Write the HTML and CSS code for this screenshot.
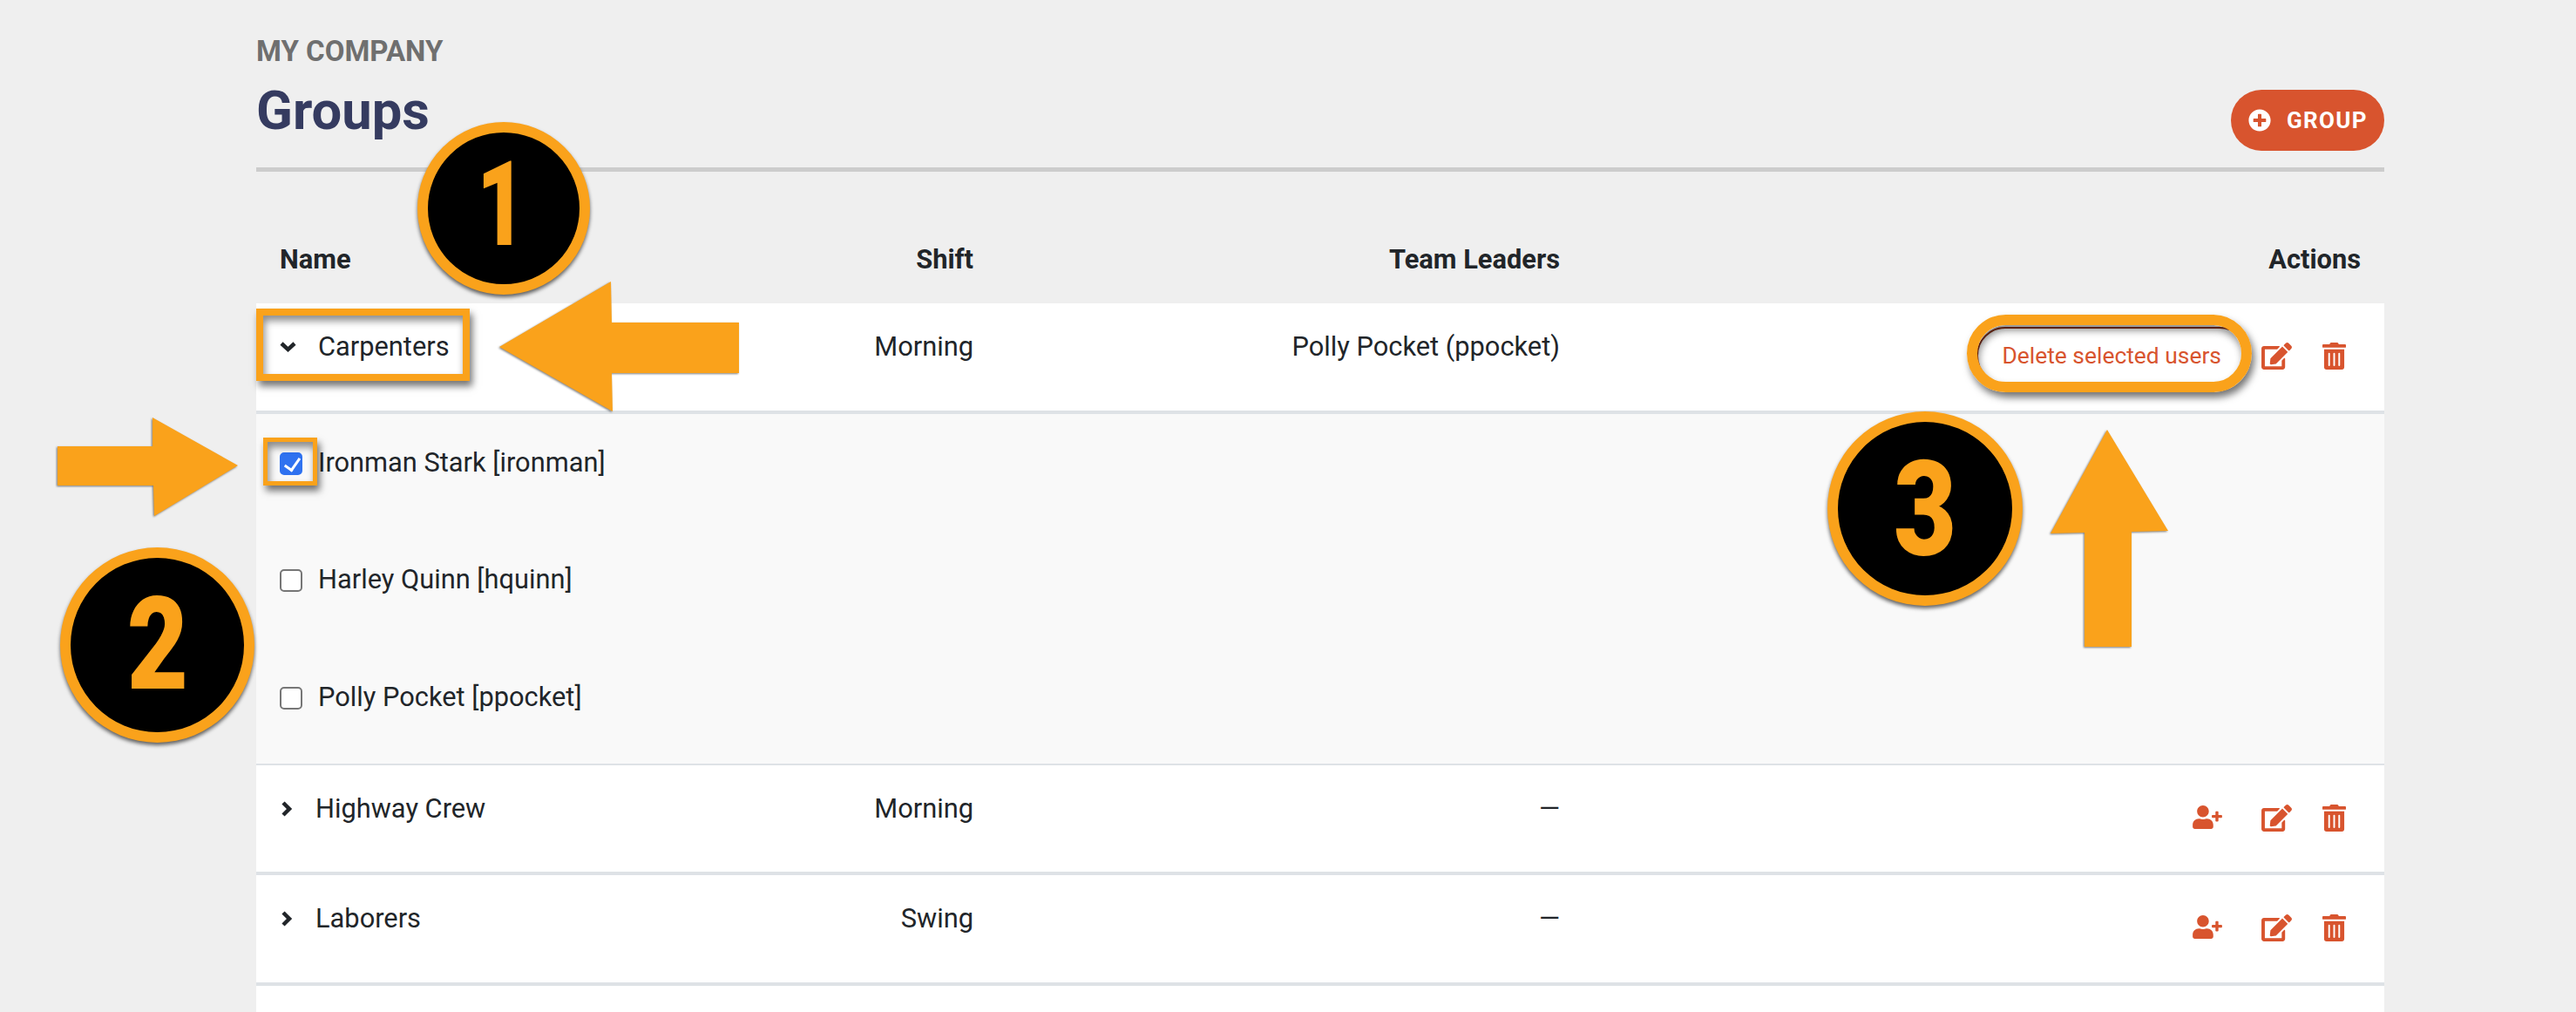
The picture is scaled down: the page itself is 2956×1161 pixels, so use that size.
FILE: index.html
```html
<!DOCTYPE html>
<html lang="en">
<head>
<meta charset="utf-8">
<title>Groups</title>
<link rel="stylesheet" href="styles.css">
</head>
<body>
<div class="page">
  <header class="page-head">
    <div>
      <div class="eyebrow">MY COMPANY</div>
      <h1 class="title">Groups</h1>
    </div>
    <button class="add-btn" type="button">
      <svg class="add-icon" viewBox="0 0 512 512"><path d="M256 8C119 8 8 119 8 256s111 248 248 248 248-111 248-248S393 8 256 8zm144 276c0 6.6-5.4 12-12 12h-92v92c0 6.6-5.4 12-12 12h-56c-6.6 0-12-5.4-12-12v-92h-92c-6.6 0-12-5.4-12-12v-56c0-6.6 5.4-12 12-12h92v-92c0-6.6 5.4-12 12-12h56c6.6 0 12 5.4 12 12v92h92c6.6 0 12 5.4 12 12v56z"/></svg>
      <span>GROUP</span>
    </button>
  </header>

  <div class="cols head-row">
    <div>Name</div>
    <div class="right">Shift</div>
    <div class="right">Team Leaders</div>
    <div class="right">Actions</div>
  </div>

  <div class="cols row">
    <div class="name name-open">
      <svg class="chev" viewBox="0 0 20 20"><polyline points="2,6 9.5,13 17,6"/></svg>
      <span>Carpenters</span>
    </div>
    <div class="right">Morning</div>
    <div class="right">Polly Pocket (ppocket)</div>
    <div class="actions">
      <button class="del-btn" type="button">Delete selected users</button>
      <svg class="ico ico-edit" viewBox="0 0 576 512"><use href="#edit"/></svg>
      <svg class="ico ico-trash" viewBox="0 0 448 512"><use href="#trash"/></svg>
    </div>
  </div>

  <div class="sub">
    <label class="sub-item"><input class="check" type="checkbox" checked><span>Ironman Stark [ironman]</span></label>
    <label class="sub-item"><input class="check" type="checkbox"><span>Harley Quinn [hquinn]</span></label>
    <label class="sub-item"><input class="check" type="checkbox"><span>Polly Pocket [ppocket]</span></label>
  </div>

  <div class="cols row row-short">
    <div class="name">
      <svg class="chev" viewBox="0 0 20 20"><polyline points="4,3 11,10 4,17"/></svg>
      <span>Highway Crew</span>
    </div>
    <div class="right">Morning</div>
    <div class="right">—</div>
    <div class="actions">
      <svg class="ico ico-user" viewBox="0 0 640 512"><use href="#user"/></svg>
      <svg class="ico ico-edit" viewBox="0 0 576 512"><use href="#edit"/></svg>
      <svg class="ico ico-trash" viewBox="0 0 448 512"><use href="#trash"/></svg>
    </div>
  </div>

  <div class="cols row">
    <div class="name">
      <svg class="chev" viewBox="0 0 20 20"><polyline points="4,3 11,10 4,17"/></svg>
      <span>Laborers</span>
    </div>
    <div class="right">Swing</div>
    <div class="right">—</div>
    <div class="actions">
      <svg class="ico ico-user" viewBox="0 0 640 512"><use href="#user"/></svg>
      <svg class="ico ico-edit" viewBox="0 0 576 512"><use href="#edit"/></svg>
      <svg class="ico ico-trash" viewBox="0 0 448 512"><use href="#trash"/></svg>
    </div>
  </div>

  <div class="row-rest"></div>
</div>

<svg class="defs" width="0" height="0">
  <defs>
    <path id="edit" d="M402.6 83.2l90.2 90.2c3.8 3.8 3.8 10 0 13.8L274.4 405.6l-92.8 10.3c-12.4 1.4-22.9-9.1-21.5-21.5l10.3-92.8L388.8 83.2c3.8-3.8 10-3.8 13.8 0zm162-22.9l-48.8-48.8c-15.2-15.2-39.9-15.2-55.2 0l-35.4 35.4c-3.8 3.8-3.8 10 0 13.8l90.2 90.2c3.8 3.8 10 3.8 13.8 0l35.4-35.4c15.2-15.3 15.2-40 0-55.2zM384 346.2V448H64V128h229.8c3.2 0 6.2-1.3 8.5-3.5l40-40c7.6-7.6 2.2-20.5-8.5-20.5H48C21.5 64 0 85.5 0 112v352c0 26.5 21.5 48 48 48h352c26.5 0 48-21.5 48-48V306.2c0-10.7-12.9-16-20.5-8.5l-40 40c-2.2 2.3-3.5 5.3-3.5 8.5z"/>
    <path id="trash" d="M32 464a48 48 0 0 0 48 48h288a48 48 0 0 0 48-48V128H32zm272-256a16 16 0 0 1 32 0v224a16 16 0 0 1-32 0zm-96 0a16 16 0 0 1 32 0v224a16 16 0 0 1-32 0zm-96 0a16 16 0 0 1 32 0v224a16 16 0 0 1-32 0zM432 32H312l-9.4-18.7A24 24 0 0 0 281.1 0H166.8a23.72 23.72 0 0 0-21.4 13.3L136 32H16A16 16 0 0 0 0 48v32a16 16 0 0 0 16 16h416a16 16 0 0 0 16-16V48a16 16 0 0 0-16-16z"/>
    <path id="user" d="M624 208h-64v-64c0-8.8-7.2-16-16-16h-32c-8.8 0-16 7.2-16 16v64h-64c-8.8 0-16 7.2-16 16v32c0 8.8 7.2 16 16 16h64v64c0 8.8 7.2 16 16 16h32c8.8 0 16-7.2 16-16v-64h64c8.8 0 16-7.2 16-16v-32c0-8.8-7.2-16-16-16zm-400 48c70.7 0 128-57.3 128-128S294.7 0 224 0 96 57.3 96 128s57.3 128 128 128zm89.6 32h-16.7c-22.2 10.2-46.9 16-72.9 16s-50.6-5.8-72.9-16h-16.7C60.2 288 0 348.2 0 422.4V464c0 26.5 21.5 48 48 48h352c26.5 0 48-21.5 48-48v-41.6c0-74.2-60.2-134.4-134.4-134.4z"/>
  </defs>
</svg>

<svg class="arrows" viewBox="0 0 2956 1161">
  <polygon class="arrow" points="848,370 702,370 701,323 573,398 703,472 702,428 848,428"/>
  <polygon class="arrow" points="66,512 175,512 175,479 273,534 177,592 176,557 66,557"/>
  <polygon class="arrow" points="2418,493 2488,609 2446,610 2446,742 2392,742 2392,611 2353,612"/>
</svg>

<div class="ring ring-name"></div>
<div class="ring ring-check"></div>
<div class="ring ring-del"></div>

<div class="badge badge-1"><span class="digit">1</span></div>
<div class="badge badge-2"><span class="digit">2</span></div>
<div class="badge badge-3"><span class="digit">3</span></div>
</body>
</html>
```
FILE: styles.css
```css
* { box-sizing: border-box; }
html, body { margin: 0; height: 1161px; overflow: hidden; }
body {
  background: #efefef;
  color: #212529;
  font-family: Roboto, "Liberation Sans", sans-serif;
  font-size: 30.8px;
  line-height: 36px;
  position: relative;
}
.page { width: 2442px; margin-left: 294px; }

.page-head {
  height: 197px;
  padding-top: 40px;
  border-bottom: 5px solid #ccc;
  display: flex;
  justify-content: space-between;
  align-items: flex-start;
}
.eyebrow { font-size: 33px; line-height: 38px; font-weight: 700; color: #6f6f6f; }
.title { margin: 14px 0 0; font-size: 61.5px; line-height: 70px; font-weight: 700; color: #353b60; }

.add-btn {
  margin-top: 63px;
  width: 176px;
  height: 70px;
  padding: 0 0 0 20px;
  border: 0;
  border-radius: 35px;
  background: #d8542e;
  color: #fff;
  font: 700 26px/1 Roboto, sans-serif;
  letter-spacing: 1.3px;
  display: flex;
  align-items: center;
  gap: 18px;
}
.add-icon { width: 26px; height: 26px; fill: #fff; }

.cols {
  display: grid;
  grid-template-columns: 400px 396px 673px 919px;
  padding: 0 27px;
}
.right { text-align: right; }

.head-row {
  height: 151px;
  padding-top: 83px;
  font-weight: 700;
}

.row {
  height: 127px;
  background: #fff;
  border-bottom: 4px solid #dee2e6;
  padding-top: 32px;
}
.row-short { height: 126px; }

.name { display: flex; align-items: center; gap: 21px; height: 36px; }
.name-open { gap: 24px; }
.chev { width: 20px; height: 20px; flex: none; }
.chev polyline { fill: none; stroke: #212529; stroke-width: 4.5; }

.actions {
  margin-top: -32px;
  display: flex;
  justify-content: flex-end;
  align-items: flex-start;
  padding-right: 17px;
}
.ico { fill: #d8542e; height: 31px; margin-top: 45px; flex: none; }
.ico-edit { width: 35px; }
.ico-trash { width: 27px; margin-left: 35px; }
.ico-user { width: 34px; height: 27px; margin-top: 46px; margin-right: 45px; }

.del-btn {
  margin: 27px 15px 0 0;
  height: 66px;
  padding: 0 29px 0 27px;
  background: #fff;
  border: 2px solid #8a3018;
  border-radius: 33px;
  color: #d8542e;
  font: 400 26.4px/1 Roboto, sans-serif;
}

.sub {
  background: #f9f9f9;
  border-bottom: 2px solid #dee2e6;
  height: 403px;
  padding-left: 27px;
}
.sub-item {
  height: 134.4px;
  padding-top: 38px;
  display: flex;
  align-items: flex-start;
  gap: 18px;
}
.check {
  appearance: none;
  width: 26px;
  height: 26px;
  margin: 6px 0 0;
  flex: none;
  background: #fff;
  border: 2px solid #767676;
  border-radius: 5px;
  position: relative;
}
.check:checked { background: #2f72f0; border-color: #2f72f0; }
.check:checked::after {
  content: "";
  position: absolute;
  left: 7px;
  top: 1px;
  width: 8px;
  height: 15px;
  border: solid #fff;
  border-width: 0 3.5px 3.5px 0;
  transform: rotate(35deg);
}

.row-rest { height: 40px; background: #fff; }

.defs { position: absolute; }

.arrows {
  position: absolute;
  left: 0;
  top: 0;
  width: 2956px;
  height: 1161px;
  pointer-events: none;
}
.arrow { fill: #faa21b; filter: drop-shadow(-1px 1px 1px rgba(0,0,0,.5)); }

.ring {
  position: absolute;
  border: solid #faa21b;
  box-shadow: 3px 6px 8px rgba(0,0,0,.55), inset 2px 6px 8px rgba(0,0,0,.45);
}
.ring-name { left: 294px; top: 354px; width: 245px; height: 83px; border-width: 8px; }
.ring-check { left: 302px; top: 502px; width: 62px; height: 55px; border-width: 5px; }
.ring-del { left: 2257px; top: 361px; width: 327px; height: 89px; border-width: 12px; border-radius: 45px; }

.badge {
  position: absolute;
  border-radius: 50%;
  border: 12px solid #faa21b;
  background: #000;
  box-shadow: 0 3px 4px rgba(0,0,0,.6);
  display: flex;
  align-items: center;
  justify-content: center;
  color: #faa21b;
  font-weight: 900;
}
.digit { display: block; transform: scaleX(.82); line-height: 1; }
.badge-1 { left: 479px; top: 140px; width: 198px; height: 198px; font-size: 135px; padding: 0 6px 8px 0; }
.badge-1 .digit { transform: scaleX(.72); }
.badge-2 { left: 69px; top: 628px; width: 223px; height: 224px; font-size: 148px; }
.badge-3 { left: 2097px; top: 472px; width: 224px; height: 223px; font-size: 152px; padding-top: 3px; }
```
